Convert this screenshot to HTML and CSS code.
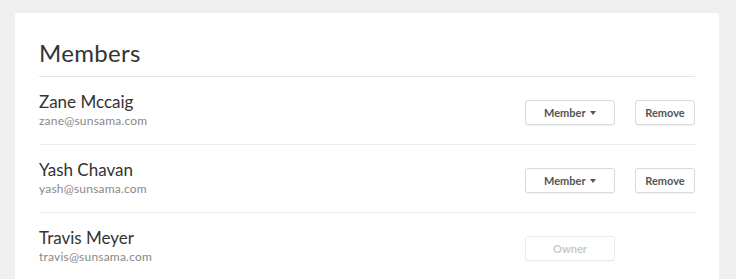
FILE: index.html
```html
<!DOCTYPE html>
<html>
<head>
  <link rel="stylesheet" href="styles.css">
</head>
<body>
  <div class="card">
    <div class="card-title">Members</div>

    <div class="member">
      <div class="member-info">
        <div class="member-name">Zane Mccaig</div>
        <div class="member-email">zane@sunsama.com</div>
      </div>
      <div class="member-actions">
        <button class="btn btn-role">Member <span class="caret"></span></button>
        <button class="btn btn-remove">Remove</button>
      </div>
    </div>

    <div class="member">
      <div class="member-info">
        <div class="member-name">Yash Chavan</div>
        <div class="member-email">yash@sunsama.com</div>
      </div>
      <div class="member-actions">
        <button class="btn btn-role">Member <span class="caret"></span></button>
        <button class="btn btn-remove">Remove</button>
      </div>
    </div>

    <div class="member">
      <div class="member-info">
        <div class="member-name">Travis Meyer</div>
        <div class="member-email">travis@sunsama.com</div>
      </div>
      <div class="member-actions">
        <button class="btn btn-role btn-disabled" disabled>Owner</button>
        <div class="btn-spacer"></div>
      </div>
    </div>
  </div>
</body>
</html>
```

FILE: styles.css
```css
body {
  margin: 0;
  background: #efefef;
  font-family: 'Lato', 'Open Sans', sans-serif;
  color: #333333;
}

.card {
  background: #ffffff;
  margin: 13px 17px 0 15px;
  padding: 25px 24px 40px 24px;
  border-radius: 2px;
  min-height: 300px;
}

.card-title {
  font-size: 24px;
  line-height: 30px;
  letter-spacing: 0.3px;
  padding-bottom: 8px;
  border-bottom: 1px solid #e4e4e4;
  color: #333333;
}

.member {
  display: flex;
  justify-content: space-between;
  align-items: flex-start;
  padding: 14px 0 15px 0;
  border-bottom: 1px solid #ececec;
}

.member-name {
  font-size: 17px;
  line-height: 22px;
  color: #333333;
}

.member-email {
  font-size: 12px;
  line-height: 16px;
  letter-spacing: 0.2px;
  color: #888888;
}

.member-actions {
  display: flex;
  gap: 20px;
  margin-top: 9px;
}

.btn {
  height: 25px;
  padding: 0;
  border: 1px solid #dadada;
  border-radius: 3px;
  background: #ffffff;
  box-shadow: 0 1px 1px rgba(0, 0, 0, 0.06);
  font-family: 'Lato', 'Open Sans', sans-serif;
  font-size: 11px;
  font-weight: bold;
  color: #555555;
}

.btn-role {
  width: 90px;
}

.btn-remove,
.btn-spacer {
  width: 60px;
}

.btn-disabled {
  border-color: #ebebeb;
  color: #c9c9c9;
  box-shadow: 0 1px 1px rgba(0, 0, 0, 0.03);
}

.caret {
  display: inline-block;
  width: 0;
  height: 0;
  margin-left: 2px;
  vertical-align: 2px;
  border-left: 3.5px solid transparent;
  border-right: 3.5px solid transparent;
  border-top: 4px solid #555555;
}
```
